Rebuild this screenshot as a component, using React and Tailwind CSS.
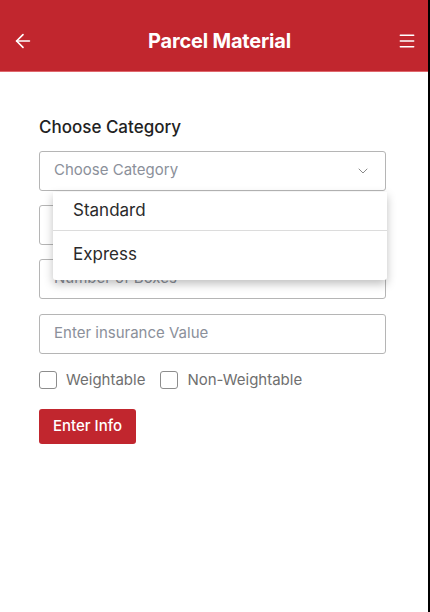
import { ArrowLeft, Menu, ChevronDown } from "lucide-react";

const font = { fontFamily: "Inter, 'Noto Sans', sans-serif" };

const Field = ({ placeholder }) => (
  <div className="h-10 w-full rounded-[3px] border border-[#b5b5b5] bg-white px-[14px] flex items-center">
    <span className="text-[15px] text-[#8b909a]">{placeholder}</span>
  </div>
);

const Check = ({ label }) => (
  <label className="flex items-center gap-[9px]">
    <span className="h-[18px] w-[18px] rounded-[3px] border border-[#8d8d8d] bg-white" />
    <span className="text-[15px] text-[#6f6f6f]">{label}</span>
  </label>
);

export default function App() {
  return (
    <div className="h-[612px] w-[430px] bg-black flex" style={font}>
      <div className="h-full w-[428px] bg-white flex flex-col">
        <header className="h-[72px] bg-[#c1262e] border-b border-[#e0676c] flex items-center justify-between pt-[10px] pl-[12px] pr-[11px] text-white">
          <ArrowLeft size={22} strokeWidth={1.8} />
          <h1 className="text-[20px] font-bold tracking-[-0.2px] pl-[8px]">Parcel Material</h1>
          <Menu size={20} strokeWidth={1.8} />
        </header>

        <div className="px-[39px] pt-[43px] pr-[42px]">
          <p className="text-[17px] font-medium text-[#222] mb-[10px]">Choose Category</p>

          <div className="relative">
            <div className="h-10 w-full rounded-[3px] border border-[#b5b5b5] bg-white pl-[14px] pr-[14px] flex items-center justify-between">
              <span className="text-[15px] text-[#8b909a]">Choose Category</span>
              <ChevronDown size={16} strokeWidth={1.3} className="text-[#777]" />
            </div>

            <div className="mt-[14px] flex flex-col gap-[14px]">
              <Field placeholder="" />
              <Field placeholder="Number of Boxes" />
              <div className="mt-[1px]">
                <Field placeholder="Enter insurance Value" />
              </div>
            </div>

            <div className="absolute left-[14px] -right-[1px] top-[41px] z-10 bg-white rounded-b-[3px] shadow-[0_4px_10px_rgba(0,0,0,0.25)]">
              <div className="h-[39px] pl-[20px] flex items-center border-b border-[#dcdcdc] text-[17px] text-[#2a2a2a]">Standard</div>
              <div className="h-[49px] pl-[20px] flex items-center text-[17px] text-[#2a2a2a]">Express</div>
            </div>
          </div>

          <div className="mt-[15px] flex items-center gap-[15px]">
            <Check label="Weightable" />
            <Check label="Non-Weightable" />
          </div>

          <button className="mt-[18px] h-[35px] w-[97px] rounded-[3px] bg-[#c1262e] text-white text-[15px] font-medium">
            Enter Info
          </button>
        </div>
      </div>
    </div>
  );
}
